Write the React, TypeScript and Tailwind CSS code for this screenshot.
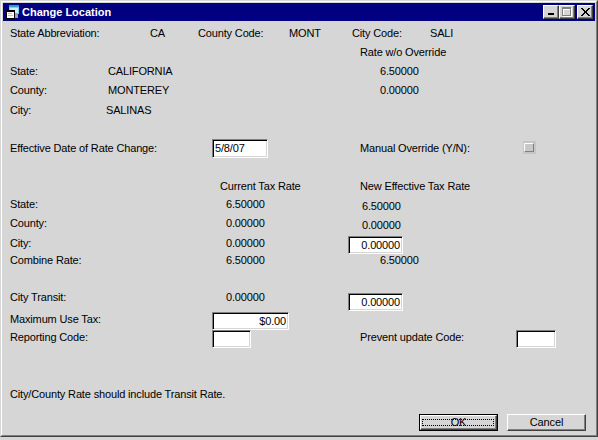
import React from "react";

const sunken =
  "bg-white border border-t-[#808080] border-l-[#808080] border-b-white border-r-white shadow-[inset_1px_1px_0_#000000,inset_-1px_-1px_0_#d6d6d6] flex items-center leading-[13px]";

function CapButton({ children }: { children: React.ReactNode }) {
  return (
    <div className="w-[16px] h-[14px] bg-[#d6d6d6] border border-t-white border-l-white border-b-[#404040] border-r-[#404040] shadow-[inset_-1px_-1px_0_#808080] flex items-center justify-center">
      {children}
    </div>
  );
}

function TitleIcon() {
  return (
    <svg width="16" height="16" viewBox="0 0 16 16" shapeRendering="crispEdges">
      <rect x="4" y="1" width="10" height="9" fill="#7fd0e8" />
      <rect x="4" y="1" width="10" height="2" fill="#30a0c0" />
      <rect x="5" y="4" width="8" height="5" fill="#c8f0fc" />
      <rect x="1" y="6" width="9" height="9" fill="#000000" />
      <rect x="2" y="8" width="7" height="6" fill="#ffffff" />
      <rect x="10" y="9" width="3" height="5" fill="#a0a0a0" />
      <rect x="3" y="9" width="4" height="1" fill="#c0c0c0" />
      <rect x="3" y="11" width="5" height="1" fill="#c0c0c0" />
    </svg>
  );
}

export default function App() {
  return (
    <div className="w-[598px] h-[440px] bg-[#d6d6d6] font-['Liberation_Sans',Arial,sans-serif] text-[11px] tracking-[-0.15px] text-black leading-[13px] overflow-hidden">
      <div className="w-[598px] h-[437px] border border-t-[#d6d6d6] border-l-[#d6d6d6] border-b-[#404040] border-r-[#404040]">
        <div className="w-full h-full border border-t-white border-l-white border-b-[#808080] border-r-[#808080] p-[1px] flex flex-col">
          {/* Title bar */}
          <div className="h-[18px] bg-[#000080] flex items-center pl-[2px] pr-[2px] shrink-0">
            <TitleIcon />
            <span className="ml-[1px] text-white font-bold tracking-normal text-[11px] leading-[13px]">
              Change Location
            </span>
            <div className="ml-auto flex items-center">
              <CapButton>
                <svg width="8" height="8" viewBox="0 0 8 8" shapeRendering="crispEdges">
                  <rect x="1" y="5" width="6" height="2" fill="#000" />
                </svg>
              </CapButton>
              <CapButton>
                <svg width="10" height="10" viewBox="0 0 10 10" shapeRendering="crispEdges">
                  <path d="M1.5 1.5h8v8h-8z M1.5 2.5h8" fill="none" stroke="#ffffff" strokeWidth="1" />
                  <path d="M0.5 0.5h8v8h-8z M0.5 1.5h8" fill="none" stroke="#808080" strokeWidth="1" />
                </svg>
              </CapButton>
              <div className="w-[2px]" />
              <CapButton>
                <svg width="9" height="8" viewBox="0 0 9 8" shapeRendering="crispEdges">
                  <path d="M0 0h2l2.5 3 2.5-3h2l-3.5 4 3.5 4h-2l-2.5-3-2.5 3h-2l3.5-4z" fill="#000" />
                </svg>
              </CapButton>
            </div>
          </div>

          {/* Body */}
          <div className="flex flex-col pt-[3px] pl-[7px]">
            <div className="flex items-center h-[18px]">
              <div className="w-[140px]">State Abbreviation:</div>
              <div className="w-[48px]">CA</div>
              <div className="w-[91px]">County Code:</div>
              <div className="w-[63px]">MONT</div>
              <div className="w-[78px]">City Code:</div>
              <div>SALI</div>
            </div>
            <div className="flex items-center h-[20px]">
              <div className="w-[350px]" />
              <div>Rate w/o Override</div>
            </div>
            <div className="flex items-center h-[18px]">
              <div className="w-[98px]">State:</div>
              <div className="w-[272px]">CALIFORNIA</div>
              <div>6.50000</div>
            </div>
            <div className="flex items-center h-[20px]">
              <div className="w-[98px]">County:</div>
              <div className="w-[272px]">MONTEREY</div>
              <div>0.00000</div>
            </div>
            <div className="flex items-center h-[20px]">
              <div className="w-[96px]">City:</div>
              <div>SALINAS</div>
            </div>
            <div className="flex items-center h-[21px] mt-[18px]">
              <div className="w-[202px]">Effective Date of Rate Change:</div>
              <div className={`${sunken} self-start mt-[1px] w-[56px] h-[19px] pl-[2px]`}>5/8/07</div>
              <div className="w-[92px]" />
              <div className="w-[163px]">Manual Override (Y/N):</div>
              <div className="self-start mt-[3px] w-[13px] h-[13px] bg-[#c6c6c6] pl-[1px] pt-[2px]">
                <div className="w-[10px] h-[9px] bg-[#c8c8c8] border border-t-white border-l-white border-b-[#808080] border-r-[#808080]" />
              </div>
            </div>
            <div className="flex items-center h-[20px] mt-[17px]">
              <div className="w-[210px]" />
              <div className="w-[140px]">Current Tax Rate</div>
              <div>New Effective Tax Rate</div>
            </div>
            <div className="flex items-center h-[17px]">
              <div className="w-[216px]">State:</div>
              <div className="w-[136px]">6.50000</div>
              <div className="pt-[3px]">6.50000</div>
            </div>
            <div className="flex items-center h-[20px]">
              <div className="w-[216px]">County:</div>
              <div className="w-[136px]">0.00000</div>
              <div className="pt-[4px]">0.00000</div>
            </div>
            <div className="flex items-center h-[20px]">
              <div className="w-[216px]">City:</div>
              <div className="w-[122px]">0.00000</div>
              <div className={`${sunken} self-start mt-[3px] w-[55px] h-[18px] justify-end pr-[2px]`}>0.00000</div>
            </div>
            <div className="flex items-center h-[15px]">
              <div className="w-[216px]">Combine Rate:</div>
              <div className="w-[154px]">6.50000</div>
              <div>6.50000</div>
            </div>
            <div className="flex items-center h-[19px] mt-[20px]">
              <div className="w-[216px]">City Transit:</div>
              <div className="w-[122px]">0.00000</div>
              <div className={`${sunken} self-start mt-[5px] w-[55px] h-[18px] justify-end pr-[2px]`}>0.00000</div>
            </div>
            <div className="flex items-center h-[18px] mt-[3px]">
              <div className="w-[202px]">Maximum Use Tax:</div>
              <div className={`${sunken} self-start mt-[2px] w-[77px] h-[18px] justify-end pr-[2px]`}>$0.00</div>
            </div>
            <div className="flex items-center h-[19px]">
              <div className="w-[202px]">Reporting Code:</div>
              <div className={`${sunken} self-start mt-[2px] w-[39px] h-[18px]`} />
              <div className="w-[109px]" />
              <div className="w-[156px]">Prevent update Code:</div>
              <div className={`${sunken} self-start mt-[2px] w-[40px] h-[18px]`} />
            </div>
            <div className="flex items-center h-[19px] mt-[38px]">
              <div>City/County Rate should include Transit Rate.</div>
            </div>
            <div className="flex items-center h-[17px] mt-[10px]">
              <div className="w-[409px]" />
              <div className="relative w-[79px] h-[17px] border border-black bg-[#d6d6d6]">
                <div className="w-full h-full border border-t-white border-l-white border-b-[#404040] border-r-[#404040] shadow-[inset_-1px_-1px_0_#808080] flex items-center justify-center">
                  OK
                </div>
                <div className="absolute left-[2px] right-[3px] top-[4px] bottom-[4px] border border-dotted border-black" />
              </div>
              <div className="w-[9px]" />
              <div className="w-[79px] h-[17px] bg-[#d6d6d6] border border-t-white border-l-white border-b-[#404040] border-r-[#404040] shadow-[inset_-1px_-1px_0_#808080] flex items-center justify-center">
                Cancel
              </div>
            </div>
          </div>
        </div>
      </div>
    </div>
  );
}
